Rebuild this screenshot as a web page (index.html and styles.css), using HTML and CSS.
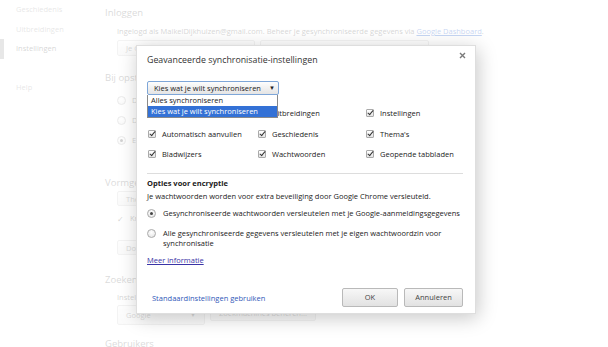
FILE: index.html
```html
<!DOCTYPE html>
<html lang="nl">

<head>
    <meta charset="UTF-8">
    <title>Instellingen</title>
    <link rel="stylesheet" href="styles.css">
</head>

<body>
    <div class="page">
        <nav class="side">
            <a href="#">Geschiedenis</a>
            <a href="#">Uitbreidingen</a>
            <a href="#" class="on">Instellingen</a>
            <a href="#" class="help">Help</a>
        </nav>

        <main class="settings">
            <section class="sec-login">
                <h2>Inloggen</h2>
                <div class="indent">
                    <p class="line">Ingelogd als MaikelDijkhuizen@gmail.com. Beheer je gesynchroniseerde gegevens via <a href="#">Google Dashboard</a>.</p>
                    <div class="btns">
                        <span class="btn">Je Google-account ontkoppelen...</span>
                        <span class="btn">Geavanceerde synchronisatie-instellingen...</span>
                    </div>
                </div>
            </section>

            <section class="sec-start">
                <h2>Bij opstarten</h2>
                <div class="indent">
                    <div class="opt"><span class="rd"></span>De pagina Nieuw tabblad openen</div>
                    <div class="opt"><span class="rd"></span>Doorgaan waar ik was gebleven</div>
                    <div class="opt"><span class="rd on"></span>Een specifieke pagina of een aantal pagina's openen</div>
                </div>
            </section>

            <section class="sec-look">
                <h2>Vormgeving</h2>
                <div class="indent">
                    <span class="btn">Thema's downloaden</span>
                    <div class="opt"><span class="tick">&#10003;</span>Knop Startpagina weergeven</div>
                    <span class="btn btn-d">Downloadlocatie wijzigen</span>
                </div>
            </section>

            <section class="sec-search">
                <h2>Zoeken</h2>
                <div class="indent">
                    <p class="line">Instellen welke zoekmachine wordt gebruikt bij het zoeken via de omnibox.</p>
                    <div class="btns">
                        <span class="btn sel">Google <i>&#9660;</i></span>
                        <span class="btn">Zoekmachines beheren...</span>
                    </div>
                </div>
            </section>

            <section class="sec-users">
                <h2>Gebruikers</h2>
            </section>
        </main>
    </div>

    <div class="overlay">
        <div class="dialog">
            <span class="close">
                <svg width="7" height="7" viewBox="0 0 7 7"><path d="M1 1L6 6M6 1L1 6" stroke="#7a7a7a" stroke-width="1.4"/></svg>
            </span>
            <h1 class="title">Geavanceerde synchronisatie-instellingen</h1>

            <div class="choose">
                <div class="select">Kies wat je wilt synchroniseren <i>&#9660;</i></div>
                <ul class="menu">
                    <li>Alles synchroniseren</li>
                    <li class="hl">Kies wat je wilt synchroniseren</li>
                </ul>
            </div>

            <div class="types">
                <label><span class="cb"></span>Apps</label>
                <label><span class="cb"></span>Uitbreidingen</label>
                <label><span class="cb"></span>Instellingen</label>
                <label><span class="cb"></span>Automatisch aanvullen</label>
                <label><span class="cb"></span>Geschiedenis</label>
                <label><span class="cb"></span>Thema's</label>
                <label><span class="cb"></span>Bladwijzers</label>
                <label><span class="cb"></span>Wachtwoorden</label>
                <label><span class="cb"></span>Geopende tabbladen</label>
            </div>

            <hr class="rule">

            <h3 class="enc-title">Opties voor encryptie</h3>
            <p class="enc-desc">Je wachtwoorden worden voor extra beveiliging door Google Chrome versleuteld.</p>

            <div class="radio first"><span class="rd on"></span><span>Gesynchroniseerde wachtwoorden versleutelen met je Google-aanmeldingsgegevens</span></div>
            <div class="radio second"><span class="rd"></span><span>Alle gesynchroniseerde gegevens versleutelen met je eigen wachtwoordzin voor synchronisatie</span></div>

            <a href="#" class="more">Meer informatie</a>

            <div class="foot">
                <a href="#" class="reset">Standaardinstellingen gebruiken</a>
                <span class="button ok">OK</span>
                <span class="button">Annuleren</span>
            </div>
        </div>
    </div>
</body>

</html>
```

FILE: styles.css
```css
* {
    box-sizing: border-box;
}

html,
body {
    margin: 0;
    padding: 0;
}

body {
    width: 608px;
    height: 347px;
    overflow: hidden;
    position: relative;
    background: #fff;
    color: #333;
    font-family: "Open Sans", "Noto Sans", sans-serif;
    font-size: 7.5px;
}

/* achtergrond: de instellingenpagina */
.page {
    display: flex;
}

.side {
    width: 105px;
    display: flex;
    flex-direction: column;
}

.side a {
    display: block;
    padding-left: 16px;
    line-height: 19.5px;
    color: #999;
    text-decoration: none;
}

.side a.on {
    color: #555;
    border-left: 4px solid #999;
    padding-left: 12px;
}

.side a.help {
    margin-top: 19px;
}

.settings {
    flex: 1;
    padding-top: 5px;
    white-space: nowrap;
}

.settings h2 {
    margin: 0;
    font-size: 9.5px;
    font-weight: normal;
    line-height: 16px;
    color: #666;
}

.indent {
    padding-left: 12px;
}

.line {
    margin: 5px 0 0;
    line-height: 10px;
    color: #555;
}

.line a {
    color: #15c;
}

.btns {
    display: flex;
    gap: 5px;
    margin-top: 4px;
}

.btn {
    display: inline-block;
    height: 16px;
    line-height: 14px;
    padding: 0 8px;
    border: 1px solid #ccc;
    border-radius: 2px;
    background: linear-gradient(#fafafa, #ebebeb);
    color: #666;
}

.sel {
    width: 88px;
    height: 20px;
    line-height: 18px;
}

.sel i {
    float: right;
    font-style: normal;
    font-size: 6px;
}

.sec-login .btns .btn:first-child {
    width: 138px;
}

.sec-start {
    margin-top: 14px;
}

.opt {
    display: flex;
    align-items: center;
    gap: 6px;
    height: 20px;
    color: #555;
}

.sec-start .indent {
    padding-top: 4px;
}

.sec-look {
    margin-top: 25px;
}

.sec-look .btn {
    height: 15px;
}

.sec-look .opt {
    margin-top: 2px;
}

.btn-d {
    margin-top: 12px;
}

.tick {
    font-size: 8px;
    color: #555;
}

.sec-search {
    margin-top: 17px;
}

.sec-search .line {
    margin-top: 4px;
}

.sec-search .btns {
    margin-top: 3px;
}

.sec-users {
    margin-top: 11px;
}

/* radio knopjes */
.rd {
    display: inline-block;
    flex: none;
    width: 9px;
    height: 9px;
    border: 1px solid #aaa;
    border-radius: 50%;
    background: radial-gradient(circle at 50% 35%, #fff, #e2e2e2);
    position: relative;
}

.rd.on::after {
    content: "";
    position: absolute;
    left: 2px;
    top: 2px;
    width: 3px;
    height: 3px;
    border-radius: 50%;
    background: #444;
}

/* overlay + dialoog */
.overlay {
    position: absolute;
    inset: 0;
    background: rgba(255, 255, 255, .76);
    padding: 45px 0 0 136px;
}

.dialog {
    width: 340px;
    height: 269px;
    background: #fff;
    border: 1px solid rgba(0, 0, 0, .13);
    box-shadow: 2px 4px 18px rgba(0, 0, 0, .22);
    padding: 0 12px 6px 10px;
    display: flex;
    flex-direction: column;
    position: relative;
    color: #222;
}

.close {
    position: absolute;
    right: 9px;
    top: 6px;
    line-height: 0;
}

.title {
    margin: 7px 0 0;
    font-size: 8.8px;
    font-weight: normal;
    line-height: 14px;
    color: #333;
}

.choose {
    position: relative;
    margin-top: 14px;
    height: 14px;
}

.select {
    width: 132px;
    height: 14px;
    line-height: 12px;
    padding-left: 6px;
    border: 1px solid #7ea6d8;
    border-radius: 2px;
    background: linear-gradient(#fdfdfd, #e4e4e4);
    color: #222;
}

.select i {
    float: right;
    margin-right: 3px;
    font-style: normal;
    font-size: 6px;
}

.menu {
    position: absolute;
    left: 0;
    top: 14px;
    z-index: 2;
    width: 131px;
    margin: 0;
    padding: 0;
    list-style: none;
    background: #fff;
    border: 1px solid #8a8a8a;
    border-top: 0;
}

.menu li {
    height: 11px;
    line-height: 11px;
    padding-left: 3px;
    color: #222;
}

.menu li.hl {
    background: #3371d6;
    color: #fff;
}

.types {
    display: grid;
    grid-template-columns: 110px 108px 1fr;
    grid-auto-rows: 20.5px;
    margin-top: 8px;
    padding-left: 1px;
}

.types label {
    display: flex;
    align-items: center;
    gap: 6px;
    white-space: nowrap;
}

.cb {
    width: 8px;
    height: 8px;
    border: 1px solid #aaa;
    border-radius: 1px;
    background: linear-gradient(#fff, #e4e4e4);
    position: relative;
    flex: none;
}

.cb::after {
    content: "";
    position: absolute;
    left: 2px;
    top: -1px;
    width: 2px;
    height: 5px;
    border: solid #333;
    border-width: 0 1.5px 1.5px 0;
    transform: rotate(40deg);
}

.rule {
    margin: 8px 0 0;
    border: 0;
    border-top: 1px solid #ddd;
}

.enc-title {
    margin: 4px 0 0;
    font-size: 7.5px;
    font-weight: bold;
    line-height: 11px;
}

.enc-desc {
    margin: 2px 0 0;
    line-height: 10px;
}

.radio {
    display: flex;
    align-items: flex-start;
    gap: 7px;
    margin-right: -6px;
    line-height: 9.5px;
}

.radio.first {
    margin-top: 8px;
}

.radio.second {
    margin-top: 11px;
    padding-right: 18px;
}

.more {
    margin-top: 7px;
    line-height: 10px;
    color: #3a34a6;
    align-self: flex-start;
}

.foot {
    margin-top: auto;
    display: flex;
    align-items: center;
    height: 19px;
}

.reset {
    padding-left: 5px;
    color: #2f58b8;
    text-decoration: none;
    margin-right: auto;
}

.button {
    height: 19px;
    line-height: 17px;
    text-align: center;
    width: 59px;
    border: 1px solid #b9b9b9;
    border-radius: 2px;
    background: linear-gradient(#f7f7f7, #e2e2e2);
    color: #444;
}

.button.ok {
    width: 56px;
    margin-right: 6px;
}
```
